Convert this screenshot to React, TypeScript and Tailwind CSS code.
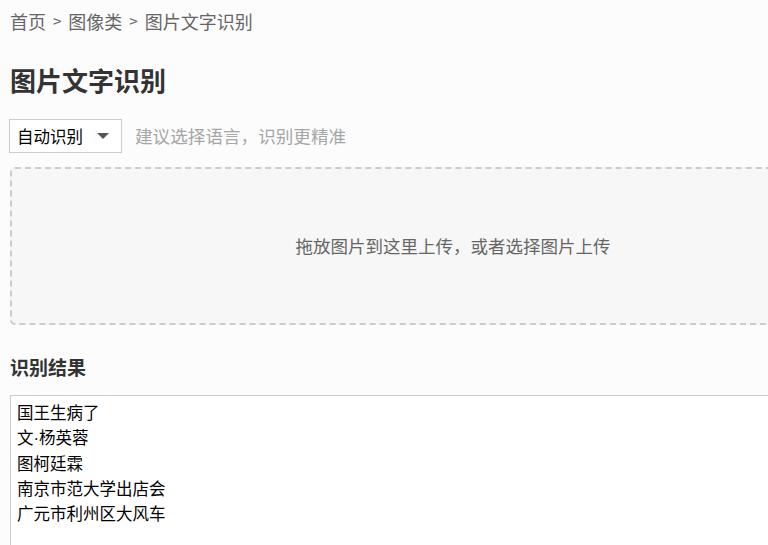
export default function App() {
  const lines = ['国王生病了', '文·杨英蓉', '图柯廷霖', '南京市范大学出店会', '广元市利州区大风车'];

  return (
    <div
      className="w-[768px] h-[545px] overflow-hidden bg-[#fcfcfc]"
      style={{ fontFamily: '"Noto Sans CJK SC", "Noto Sans", sans-serif' }}
    >
      <div className="w-[886px] pl-[10px] pt-[9px]">
        {/* Breadcrumb */}
        <div className="flex items-center text-[18px] leading-[24px] text-[#666]">
          <span>首页</span>
          <span className="mx-[7px] text-[15px]">&gt;</span>
          <span>图像类</span>
          <span className="mx-[7px] text-[15px]">&gt;</span>
          <span>图片文字识别</span>
        </div>

        <h1 className="mt-[29px] text-[26px] leading-[36px] font-bold text-[#333]">图片文字识别</h1>

        {/* Language select */}
        <div className="mt-[21px] flex items-center">
          <div className="flex h-[34px] w-[113px] items-center justify-between border border-[#ccc] bg-white pl-[7px] pr-[12px] -ml-[1px]">
            <span className="text-[16.5px] leading-[24px] text-black">自动识别</span>
            <span className="h-0 w-0 border-x-[6px] border-t-[6px] border-x-transparent border-t-[#555]" />
          </div>
          <span className="ml-[13px] text-[17.6px] leading-[24px] text-[#a6a6a6]">建议选择语言，识别更精准</span>
        </div>

        {/* Drop zone */}
        <div className="mt-[14px] flex h-[158px] w-[886px] items-center justify-center rounded-[5px] border-2 border-dashed border-[#ccc] bg-[#f7f7f7]">
          <span className="text-[17.5px] leading-[24px] text-[#666]">拖放图片到这里上传，或者选择图片上传</span>
        </div>

        <h2 className="mt-[28px] text-[19px] leading-[28px] font-bold text-[#333]">识别结果</h2>

        {/* Result */}
        <div className="mt-[14px] h-[200px] w-[886px] border border-[#ccc] bg-white px-[6px] pt-[4px]">
          {lines.map((l, i) => (
            <div key={i} className="text-[16.5px] leading-[25px] text-black">
              {l.split('·').map((part, j) => (
                <span key={j}>
                  {j > 0 && <span style={{ fontFamily: '"Liberation Sans", sans-serif' }}>·</span>}
                  {part}
                </span>
              ))}
            </div>
          ))}
        </div>
      </div>
    </div>
  );
}
